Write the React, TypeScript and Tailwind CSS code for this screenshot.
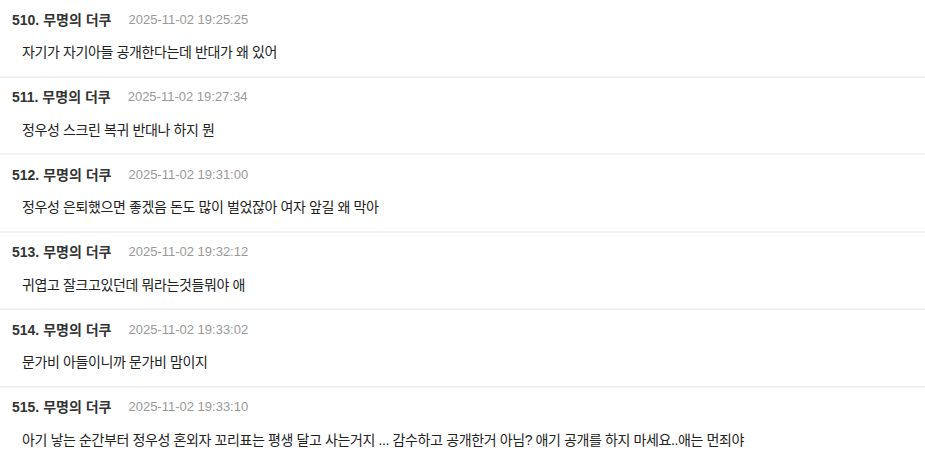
const comments = [
  { no: 510, date: "2025-11-02 19:25:25", text: "자기가 자기아들 공개한다는데 반대가 왜 있어" },
  { no: 511, date: "2025-11-02 19:27:34", text: "정우성 스크린 복귀 반대나 하지 뭔" },
  { no: 512, date: "2025-11-02 19:31:00", text: "정우성 은퇴했으면 좋겠음 돈도 많이 벌었잖아 여자 앞길 왜 막아" },
  { no: 513, date: "2025-11-02 19:32:12", text: "귀엽고 잘크고있던데 뭐라는것들뭐야 애" },
  { no: 514, date: "2025-11-02 19:33:02", text: "문가비 아들이니까 문가비 맘이지" },
  {
    no: 515,
    date: "2025-11-02 19:33:10",
    text: "아기 낳는 순간부터 정우성 혼외자 꼬리표는 평생 달고 사는거지 ... 감수하고 공개한거 아님? 애기 공개를 하지 마세요..애는 먼죄야",
  },
];

export default function App() {
  return (
    <div className="min-h-screen w-full bg-white font-['Liberation_Sans','Noto_Sans_CJK_KR',sans-serif]">
      {comments.map((c) => (
        <div key={c.no} className="border-b-2 border-[#f2f2f2] pt-[10.5px] pb-[13.5px]">
          <div className="flex items-center pl-[12px] leading-[18px]">
            <span className="text-[14px] font-bold text-[#333]">{c.no}. 무명의 더쿠</span>
            <span className="ml-[17px] text-[13px] text-[#999]">{c.date}</span>
          </div>
          <p className="mt-[13.5px] pl-[22px] text-[14px] leading-[20px] tracking-[-0.38px] text-[#222]">
            {c.text}
          </p>
        </div>
      ))}
    </div>
  );
}
